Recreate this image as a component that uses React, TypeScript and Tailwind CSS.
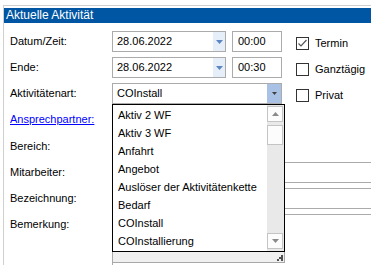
import React from "react";

function DateBox({ value }: { value: string }) {
  return (
    <div className="flex h-[21px] w-[114px] border border-[#ababab] bg-white">
      <div className="flex flex-1 items-center pl-[4px]">{value}</div>
      <div className="flex w-[12px] items-center justify-center bg-[#e5eef9]">
        <svg width="7" height="4" viewBox="0 0 7 4">
          <polygon points="0,0 7,0 3.5,4" fill="#5b86c2" />
        </svg>
      </div>
    </div>
  );
}

function TimeBox({ value }: { value: string }) {
  return (
    <div className="ml-[6px] flex h-[21px] w-[50px] items-center border border-[#ababab] bg-white pl-[5px]">
      {value}
    </div>
  );
}

function Check({ label, checked }: { label: string; checked?: boolean }) {
  return (
    <div className="ml-[14px] mt-[6px] flex h-[13px] items-center">
      <div className="flex h-[13px] w-[13px] items-center justify-center border border-[#333333] bg-white">
        {checked ? (
          <svg width="11" height="11" viewBox="0 0 11 11">
            <polyline points="1.5,5.5 4,8 9.5,2" fill="none" stroke="#555555" strokeWidth="1.2" />
          </svg>
        ) : null}
      </div>
      <span className="ml-[6px] whitespace-nowrap">{label}</span>
    </div>
  );
}

function Label({ children }: { children: React.ReactNode }) {
  return <div className="flex w-[108px] items-center whitespace-nowrap pl-[6px]">{children}</div>;
}

export default function App() {
  const items = [
    "Aktiv 2 WF",
    "Aktiv 3 WF",
    "Anfahrt",
    "Angebot",
    "Auslöser der Aktivitätenkette",
    "Bedarf",
    "COInstall",
    "COInstallierung",
  ];
  return (
    <div className="relative h-[265px] w-[371px] overflow-hidden bg-white font-['Liberation_Sans',Arial,sans-serif] text-[11px] leading-[13px] text-black">
      <div className="ml-[3px] mt-[5px] w-[420px] border-l border-t border-[#d0d0d0] pt-[2px]">
        <div className="h-[15px] bg-[#0056a3] pl-[2px] text-[12px] leading-[15px] text-white">Aktuelle Aktivität</div>
        <div className="flex flex-col pt-[8px]">
          <div className="flex h-[21px]">
            <Label>Datum/Zeit:</Label>
            <DateBox value="28.06.2022" />
            <TimeBox value="00:00" />
            <Check label="Termin" checked />
          </div>
          <div className="mt-[5px] flex h-[21px]">
            <Label>Ende:</Label>
            <DateBox value="28.06.2022" />
            <TimeBox value="00:30" />
            <Check label="Ganztägig" />
          </div>
          <div className="mt-[5px] flex h-[21px]">
            <Label>Aktivitätenart:</Label>
            <div className="flex h-[21px] w-[170px] border border-[#ababab] bg-white">
              <div className="flex flex-1 items-center pl-[4px]">COInstall</div>
              <div className="flex w-[14px] items-center justify-center bg-[#a8c1e4]">
                <svg width="5" height="3" viewBox="0 0 5 3">
                  <polygon points="0,0 5,0 2.5,3" fill="#404040" />
                </svg>
              </div>
            </div>
            <Check label="Privat" />
          </div>
          <div className="mt-[5px] flex h-[21px]">
            <Label>
              <span className="text-[#0000ff] underline">Ansprechpartner:</span>
            </Label>
            <div className="h-[21px] w-[170px] border border-[#ababab] bg-white" />
          </div>
          <div className="mt-[6px] flex h-[21px]">
            <Label>Bereich:</Label>
            <div className="h-[21px] w-[170px] border border-[#ababab] bg-white" />
          </div>
          <div className="mt-[5px] flex h-[21px]">
            <Label>Mitarbeiter:</Label>
            <div className="h-[21px] flex-1 border border-[#ababab] bg-white" />
          </div>
          <div className="mt-[5px] flex h-[21px]">
            <Label>Bezeichnung:</Label>
            <div className="h-[21px] flex-1 border border-[#ababab] bg-white" />
          </div>
          <div className="mt-[5px] flex h-[60px]">
            <div className="flex h-[21px] w-[108px] items-center whitespace-nowrap pl-[6px]">Bemerkung:</div>
            <div className="h-[60px] flex-1 border border-[#ababab] bg-white" />
          </div>
        </div>
      </div>

      <div className="absolute left-[112px] top-[104px] flex w-[173px] flex-col">
        <div className="flex h-[148px] border border-black bg-white">
          <div className="flex flex-1 flex-col overflow-hidden pl-[5px] pt-[1px]">
            {items.map((it) => (
              <div key={it} className="flex h-[18px] items-center whitespace-nowrap">
                {it}
              </div>
            ))}
          </div>
          <div className="flex w-[17px] flex-col bg-[#e9e9e9] pb-[2px] pt-[1px]">
            <div className="flex h-[16px] w-[16px] items-center justify-center border border-[#c4c4c4] bg-[#fcfcfc]">
              <svg width="7" height="4" viewBox="0 0 7 4">
                <polygon points="0,4 7,4 3.5,0" fill="#8a8a8a" />
              </svg>
            </div>
            <div className="mt-[3px] h-[20px] w-[16px] border border-[#c4c4c4] bg-[#fcfcfc]" />
            <div className="mt-auto flex h-[16px] w-[16px] items-center justify-center border border-[#c4c4c4] bg-[#fcfcfc]">
              <svg width="7" height="4" viewBox="0 0 7 4">
                <polygon points="0,0 7,0 3.5,4" fill="#8a8a8a" />
              </svg>
            </div>
          </div>
        </div>
        <div className="flex h-[11px] items-end justify-end border-x border-b border-[#a8a8a8] bg-[#f0f0f0] pb-[1px] pr-[1px]">
          <svg width="6" height="6" viewBox="0 0 6 6">
            <rect x="4" y="0" width="2" height="2" fill="#505050" />
            <rect x="2" y="2" width="2" height="2" fill="#505050" />
            <rect x="4" y="2" width="2" height="2" fill="#505050" />
            <rect x="0" y="4" width="2" height="2" fill="#505050" />
            <rect x="4" y="4" width="2" height="2" fill="#505050" />
          </svg>
        </div>
      </div>
    </div>
  );
}
